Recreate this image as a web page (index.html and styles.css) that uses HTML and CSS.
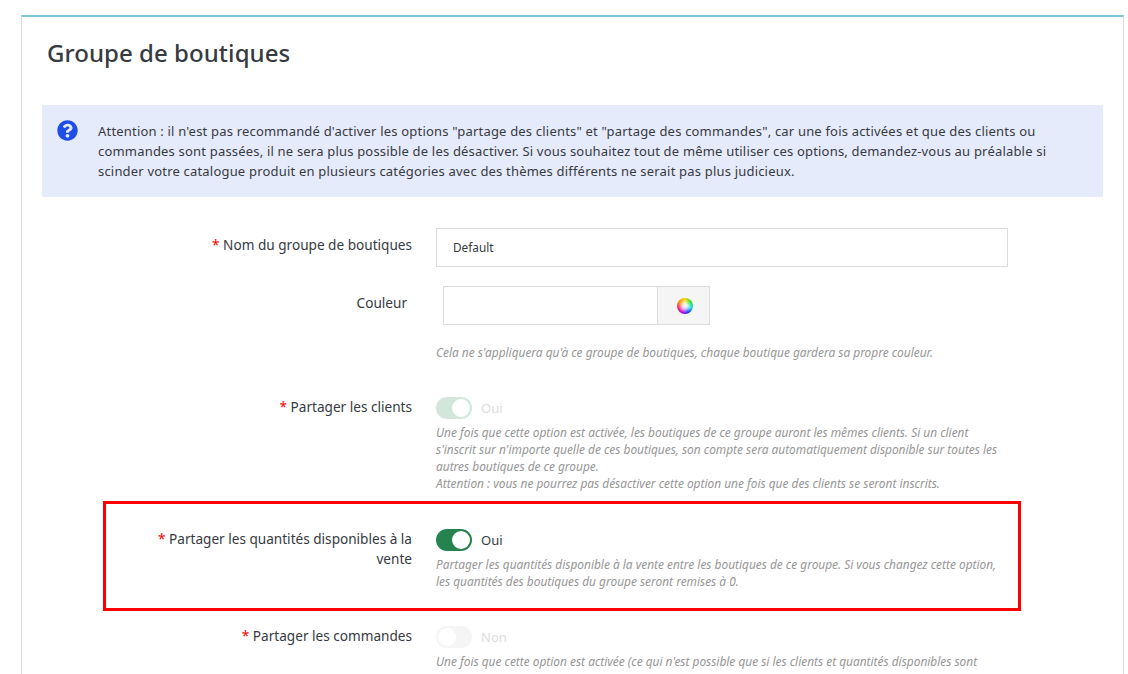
FILE: index.html
```html
<!DOCTYPE html>
<html lang="fr">
<head>
    <meta charset="UTF-8">
    <title>Groupe de boutiques</title>
    <link rel="stylesheet" href="styles.css">
</head>
<body>
    <div class="card">
        <h2 class="card-title">Groupe de boutiques</h2>

        <div class="alert">
            <svg class="alert-icon" viewBox="0 0 512 512" width="21" height="21">
                <path fill="#1f4de8" d="M504 256c0 137-111 248-248 248S8 393 8 256 119 8 256 8s248 111 248 248zM262.700 90c-54.500 0-89.300 23-116.600 63.800-3.500 5.300-2.400 12.400 2.700 16.300l34.700 26.300c5.200 3.900 12.600 3 16.700-2.100 17.900-22.700 30.100-35.800 57.300-35.800 20.400 0 45.700 13.100 45.700 33 0 15-12.400 22.700-32.600 34-23.600 13.200-54.800 29.700-54.800 70.900V300c0 6.600 5.400 12 12 12h56c6.600 0 12-5.400 12-12v-1.300c0-28.600 83.500-29.800 83.500-107.200C379.300 133.300 318.900 90 262.700 90zM256 339c-25.500 0-46.200 20.700-46.200 46.200 0 25.500 20.700 46.200 46.200 46.200s46.200-20.700 46.200-46.200c0-25.500-20.700-46.200-46.200-46.200z"/>
            </svg>
            <p>Attention : il n'est pas recommandé d'activer les options "partage des clients" et "partage des commandes", car une fois activées et que des clients ou commandes sont passées, il ne sera plus possible de les désactiver. Si vous souhaitez tout de même utiliser ces options, demandez-vous au préalable si scinder votre catalogue produit en plusieurs catégories avec des thèmes différents ne serait pas plus judicieux.</p>
        </div>

        <form class="form">
            <div class="row row-name">
                <label class="label label-input"><span class="req">*</span> Nom du groupe de boutiques</label>
                <div class="control">
                    <input class="text-input" type="text" value="Default">
                </div>
            </div>

            <div class="row row-color">
                <label class="label label-input label-color">Couleur</label>
                <div class="control">
                    <div class="color-group">
                        <input class="color-input" type="text">
                        <span class="color-addon"><span class="color-wheel"></span></span>
                    </div>
                    <p class="help help-color">Cela ne s'appliquera qu'à ce groupe de boutiques, chaque boutique gardera sa propre couleur.</p>
                </div>
            </div>

            <div class="row row-clients">
                <label class="label"><span class="req">*</span> Partager les clients</label>
                <div class="control">
                    <div class="switch-line disabled">
                        <span class="switch on"></span>
                        <span class="switch-text">Oui</span>
                    </div>
                    <p class="help">Une fois que cette option est activée, les boutiques de ce groupe auront les mêmes clients. Si un client s'inscrit sur n'importe quelle de ces boutiques, son compte sera automatiquement disponible sur toutes les autres boutiques de ce groupe.<br>Attention : vous ne pourrez pas désactiver cette option une fois que des clients se seront inscrits.</p>
                </div>
            </div>

            <div class="row row-stock">
                <label class="label"><span class="req">*</span> Partager les quantités disponibles à la vente</label>
                <div class="control">
                    <div class="switch-line">
                        <span class="switch on"></span>
                        <span class="switch-text">Oui</span>
                    </div>
                    <p class="help">Partager les quantités disponible à la vente entre les boutiques de ce groupe. Si vous changez cette option, les quantités des boutiques du groupe seront remises à 0.</p>
                </div>
            </div>

            <div class="row">
                <label class="label"><span class="req">*</span> Partager les commandes</label>
                <div class="control">
                    <div class="switch-line disabled">
                        <span class="switch"></span>
                        <span class="switch-text">Non</span>
                    </div>
                    <p class="help">Une fois que cette option est activée (ce qui n'est possible que si les clients et quantités disponibles sont</p>
                </div>
            </div>
        </form>

        <div class="highlight"></div>
    </div>
</body>
</html>
```

FILE: styles.css
```css
html, body {
    height: 100%;
    overflow: hidden;
}

body {
    margin: 0;
    background: #fff;
    color: #363a41;
    font-family: "Noto Sans", "Open Sans", sans-serif;
    font-size: 13px;
}

.card {
    position: relative;
    width: 1103px;
    height: calc(100vh - 15px);
    margin: 15px 0 0 21px;
    border: 1px solid #dcdcdc;
    border-top: 2px solid #7cc5dc;
    border-bottom: 0;
    padding: 0 20px;
    box-sizing: border-box;
}

.card-title {
    margin: 0;
    padding: 19px 0 0 5px;
    height: 69px;
    font-size: 24px;
    line-height: 33px;
    font-weight: 500;
    color: #363a41;
    letter-spacing: 0.05px;
}

.alert {
    display: flex;
    height: 92px;
    background: #e6ebfb;
    padding: 16px 40px 0 15px;
    box-sizing: border-box;
}

.alert-icon {
    flex: none;
    margin: -1px 20px 0 0;
}

.alert p {
    margin: 0;
    line-height: 20px;
    font-size: 13px;
    letter-spacing: 0.19px;
}

.form {
    padding-top: 31px;
}

.row {
    display: flex;
}

.label {
    width: 370px;
    flex: none;
    text-align: right;
    font-size: 13.6px;
    line-height: 20px;
    padding-left: 100px;
    box-sizing: border-box;
    color: #363a41;
}

.label-input {
    padding-top: 7px;
}

.label-color {
    padding-right: 5px;
}

.req {
    color: #f00;
}

.control {
    width: 572px;
    margin-left: 24px;
}

.row-name {
    height: 58px;
}

.text-input {
    display: block;
    width: 100%;
    height: 39px;
    box-sizing: border-box;
    border: 1px solid #dcdcdc;
    padding: 0 16px 2px;
    font: 11.8px "Noto Sans", sans-serif;
    color: #363a41;
    outline: none;
}

.row-color {
    height: 111px;
}

.color-group {
    display: flex;
    width: 267px;
    height: 39px;
    margin-left: 7px;
    border: 1px solid #dcdcdc;
    box-sizing: border-box;
}

.color-input {
    flex: 1;
    min-width: 0;
    border: 0;
    padding: 0;
    outline: none;
}

.color-addon {
    display: flex;
    align-items: center;
    justify-content: center;
    width: 52px;
    flex: none;
    padding-left: 2px;
    box-sizing: border-box;
    background: #f5f5f5;
    border-left: 1px solid #dcdcdc;
}

.color-wheel {
    width: 16px;
    height: 16px;
    border-radius: 50%;
    background:
        radial-gradient(circle, #fff 0%, rgba(255, 255, 255, 0.75) 25%, rgba(255, 255, 255, 0) 62%),
        conic-gradient(#ffd400, #28e028, #00e0e0, #1a30ff, #c000e0, #ff2060, #ff8a00, #ffd400);
}

.help {
    margin: 0;
    font-size: 11.9px;
    font-style: italic;
    line-height: 17px;
    color: #969696;
}

.help-color {
    margin-top: 19px;
}

.row-clients {
    height: 132px;
}

.row-stock {
    height: 97px;
}

.switch-line {
    display: flex;
    align-items: center;
    height: 22px;
    margin-bottom: 5px;
}

.switch {
    position: relative;
    width: 36px;
    height: 22px;
    flex: none;
    border-radius: 11px;
    background: #f5f5f5;
}

.switch::after {
    content: "";
    position: absolute;
    top: 2px;
    left: 2px;
    width: 18px;
    height: 18px;
    border-radius: 50%;
    background: #fff;
}

.switch.on {
    background: #25834f;
}

.switch.on::after {
    left: 16px;
}

.switch-text {
    margin-left: 9px;
    font-size: 13px;
}

.disabled .switch.on {
    background: #d3e6dc;
}

.disabled .switch-text {
    color: #dcdcdc;
}

.highlight {
    position: absolute;
    left: 81px;
    top: 484px;
    width: 918px;
    height: 110px;
    box-sizing: border-box;
    border: 3px solid #f00;
}
```
